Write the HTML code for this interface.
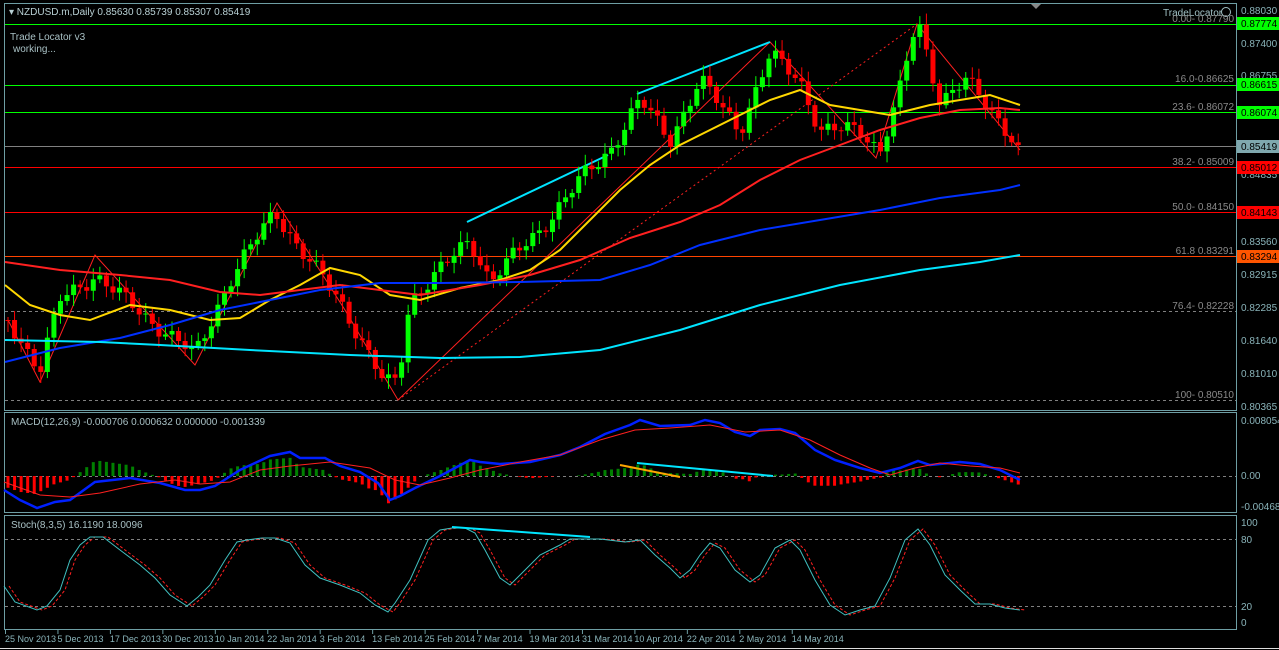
<!DOCTYPE html><html><head><meta charset="utf-8"><style>
html,body{margin:0;padding:0;background:#000;width:1279px;height:650px;overflow:hidden}
svg{display:block;font-family:"Liberation Sans",sans-serif}
</style></head><body>
<svg id="s" width="1279" height="650" viewBox="0 0 1279 650" xmlns="http://www.w3.org/2000/svg">
<rect width="1279" height="650" fill="#000"/>
<g fill="none" stroke="#6e9ea4" stroke-width="1">
<rect x="4.5" y="3.5" width="1232" height="407"/>
<rect x="4.5" y="412.5" width="1232" height="100"/>
<rect x="4.5" y="515.5" width="1232" height="114"/>
</g>
<line x1="0" y1="648.5" x2="1279" y2="648.5" stroke="#ddd"/>
<polygon points="1031,4 1041,4 1036,9" fill="#888"/>
<g id="lines"></g>
<g id="g"></g>
<g font-size="10" fill="#a0c0c4">
<text x="9" y="15" font-size="10" fill="#b8d0d4">▾ NZDUSD.m,Daily  0.85630 0.85739 0.85307 0.85419</text>
<text x="10" y="40" fill="#a8c0c4">Trade Locator v3</text>
<text x="13" y="52" fill="#a8c0c4">working...</text>
<text x="1163" y="16" fill="#a0c0c4">TradeLocator</text>
<circle cx="1226" cy="12" r="4.5" fill="none" stroke="#a0c0c4"/>
<text x="11" y="425" fill="#a8c0c4">MACD(12,26,9) -0.000706 0.000632 0.000000 -0.001339</text>
<text x="11" y="528" fill="#a8c0c4">Stoch(8,3,5) 16.1190 18.0096</text>
</g>
<g font-size="10" fill="#8a8a8a" text-anchor="end">
<text x="1234" y="22">0.00- 0.87790</text>
<text x="1234" y="82">16.0-0.86625</text>
<text x="1234" y="110">23.6- 0.86072</text>
<text x="1234" y="165">38.2- 0.85009</text>
<text x="1234" y="210">50.0- 0.84150</text>
<text x="1234" y="254">61.8 0.83291</text>
<text x="1234" y="309">76.4- 0.82228</text>
<text x="1234" y="398">100- 0.80510</text>
</g>
<g font-size="10" fill="#8ab4ba">
<text x="1241" y="14">0.88030</text>
<text x="1241" y="47">0.87400</text>
<text x="1241" y="79">0.86755</text>
<text x="1241" y="178">0.84835</text>
<text x="1241" y="245">0.83560</text>
<text x="1241" y="278">0.82915</text>
<text x="1241" y="311">0.82285</text>
<text x="1241" y="344">0.81640</text>
<text x="1241" y="377">0.81010</text>
<text x="1241" y="410">0.80365</text>
<text x="1241" y="424">0.008054</text>
<text x="1241" y="479">0.00</text>
<text x="1241" y="510">-0.00468</text>
<text x="1241" y="526">100</text>
<text x="1241" y="543">80</text>
<text x="1241" y="610">20</text>
<text x="1241" y="626">0</text>
</g>
<g font-size="10">
<rect x="1237" y="17" width="42" height="13" fill="#00ff00"/><text x="1241" y="27" fill="#000">0.87774</text>
<rect x="1237" y="78" width="42" height="13" fill="#00ff00"/><text x="1241" y="88" fill="#000">0.86615</text>
<rect x="1237" y="106" width="42" height="13" fill="#00ff00"/><text x="1241" y="116" fill="#000">0.86074</text>
<rect x="1237" y="140" width="42" height="13" fill="#7fa8ae"/><text x="1241" y="150" fill="#000">0.85419</text>
<rect x="1237" y="161" width="42" height="13" fill="#ff0000"/><text x="1241" y="171" fill="#000">0.85012</text>
<rect x="1237" y="206" width="42" height="13" fill="#ff0000"/><text x="1241" y="216" fill="#000">0.84143</text>
<rect x="1237" y="250" width="42" height="13" fill="#ff5500"/><text x="1241" y="260" fill="#000">0.83294</text>
</g>
<g font-size="9" fill="#8ab4ba" id="dates"></g>
</svg>
<script>
var NS="http://www.w3.org/2000/svg",g=document.getElementById('g'),L=document.getElementById('lines');
function el(p,t,a){var e=document.createElementNS(NS,t);for(var k in a)e.setAttribute(k,a[k]);p.appendChild(e);return e}
function ip(P,x){if(x<=P[0][0])return P[0][1];for(var i=1;i<P.length;i++)if(x<=P[i][0]){var a=P[i-1],b=P[i];return a[1]+(b[1]-a[1])*(x-a[0])/(b[0]-a[0])}return P[P.length-1][1]}
function pl(p,P,c,w,d){el(p,'polyline',{points:P.map(function(q){return q.join(',')}).join(' '),fill:'none',stroke:c,'stroke-width':w||1,'stroke-dasharray':d||''})}
function hl(y,c,d){el(L,'line',{x1:5,x2:1236,y1:y+.5,y2:y+.5,stroke:c,'stroke-dasharray':d||''})}
hl(24,'#00ff00');hl(85,'#00ff00');hl(112,'#00ff00');hl(146,'#808080');hl(167,'#ff0000');hl(212,'#ff0000');hl(256,'#ff4400');hl(311,'#808080','3,3');hl(400,'#808080','3,3');
hl(476,'#808080','3,3');hl(539,'#808080','3,3');hl(606,'#808080','3,3');
pl(g,[[8,320],[40,382],[95,255],[195,365],[277,203],[345,310],[398,400],[770,42],[876,158],[917,24],[1020,150]],'#ff2020',1);
pl(g,[[398,400],[917,24]],'#ff2020',1,'2,3');
pl(g,[[467,222],[608,155]],'#00e5ff',2);pl(g,[[637,94],[770,42]],'#00e5ff',2);
var C=[[8,320],[40,370],[60,300],[95,275],[150,320],[195,355],[230,280],[275,210],[300,250],[340,300],[385,385],[398,380],[410,300],[440,270],[470,240],[490,280],[540,230],[580,180],[610,150],[640,100],[670,140],[700,80],[740,130],[770,55],[800,80],[820,130],[860,130],[880,150],[900,90],[917,20],[940,100],[965,80],[990,110],[1020,145]];
var prev=ip(C,8);
for(var i=0;i<155;i++){var x=8+i*6.56,c=ip(C,x)+Math.sin(i*1.7)*6+Math.sin(i*.63)*4;if(i==154)c=145;var o=prev;prev=c;
var up=c<o,col=up?'#00ff00':'#ff0000',t=Math.min(o,c),b=Math.max(o,c);if(b-t<1)b=t+1;
var h=t-3-Math.abs(Math.sin(i*2.3))*8,l=b+3+Math.abs(Math.cos(i*1.9))*8;
el(g,'line',{x1:x,x2:x,y1:h,y2:l,stroke:col});el(g,'rect',{x:x-2.5,y:t,width:5,height:b-t,fill:col});}
pl(g,[[5,285],[30,305],[60,315],[90,320],[130,305],[170,310],[210,320],[240,318],[270,300],[300,285],[330,268],[360,275],[390,295],[420,300],[460,288],[500,280],[530,270],[560,250],[590,220],[620,190],[650,165],[680,145],[710,130],[740,115],[770,100],[800,90],[830,105],[860,110],[890,115],[910,110],[930,105],[960,100],[990,95],[1020,105]],'#ffd700',2);
pl(g,[[5,262],[60,270],[120,275],[170,280],[220,292],[260,295],[300,290],[340,285],[380,290],[420,295],[480,285],[530,275],[580,260],[630,238],[680,222],[720,205],[760,180],[800,160],[840,145],[880,130],[920,118],[960,110],[1000,108],[1020,110]],'#ff2020',2);
pl(g,[[5,362],[60,348],[120,338],[170,325],[220,310],[270,300],[320,290],[380,283],[440,283],[520,282],[600,280],[650,265],[700,245],[760,230],[820,220],[880,210],[940,198],[1000,190],[1020,185]],'#0030ff',2);
pl(g,[[5,340],[100,342],[160,345],[250,350],[350,355],[440,358],[520,357],[600,350],[680,330],[760,305],[840,285],[920,270],[980,262],[1020,255]],'#00e5ff',2);
var B=[[4,490],[20,500],[37,508],[55,502],[70,500],[95,482],[130,478],[160,483],[185,490],[200,490],[215,486],[240,470],[270,456],[290,452],[300,458],[325,458],[340,466],[360,472],[378,483],[390,500],[400,496],[415,488],[440,476],[470,460],[480,462],[500,464],[530,462],[560,455],[580,447],[605,434],[630,425],[640,420],[660,426],[690,425],[705,420],[720,423],[735,432],[750,436],[760,430],[780,429],[795,433],[815,450],[835,460],[860,468],[880,473],[900,468],[918,461],[930,465],[960,462],[980,464],[1000,470],[1020,480]];
var R=[[4,482],[40,495],[70,497],[100,493],[140,484],[175,480],[200,484],[230,482],[260,470],[290,466],[330,462],[370,468],[395,480],[420,485],[450,478],[480,470],[520,462],[560,455],[600,440],[635,430],[670,428],[710,425],[745,432],[780,430],[810,440],[840,455],[870,468],[890,475],[915,468],[940,463],[970,466],[1000,468],[1020,473]];
for(var i=0;i<155;i++){var x=8+i*6.56,d=(ip(R,x)-ip(B,x))*1.3;if(Math.abs(d)<.5)continue;
var col=d>0?'#008000':'#ff0000';el(g,'rect',{x:x-1.5,y:d>0?476-d:476,width:3,height:Math.abs(d),fill:col});}
pl(g,[[620,465],[680,477]],'#ffa500',2);pl(g,[[637,463],[773,476]],'#00e5ff',2);
pl(g,B,'#0020ff',2.5);pl(g,R,'#ff2020',1);
var S=[[4,586],[15,602],[37,610],[47,606],[60,590],[70,560],[80,545],[90,537],[103,537],[120,550],[140,565],[155,578],[170,595],[187,606],[198,597],[210,585],[225,560],[237,542],[247,540],[262,538],[275,538],[290,543],[305,565],[320,578],[340,585],[360,593],[375,605],[388,612],[395,603],[410,580],[428,540],[440,530],[452,528],[465,528],[475,533],[485,550],[500,578],[510,585],[520,575],[540,555],[560,545],[570,539],[600,539],[625,542],[640,540],[655,555],[670,568],[680,578],[690,570],[700,555],[710,543],[720,548],[735,570],[750,582],[760,575],[775,548],[790,540],[800,550],[815,580],[830,605],[845,615],[860,610],[875,606],[890,578],[905,540],[918,529],[930,545],[945,575],[960,590],[975,604],[990,604],[1005,608],[1020,610]];
pl(g,S.map(function(p){return[p[0]+5,p[1]]}),'#ff2020',1,'3,2');pl(g,S,'#40c0c0',1);
pl(g,[[452,527],[590,537]],'#00e5ff',2);
var D=['25 Nov 2013','5 Dec 2013','17 Dec 2013','30 Dec 2013','10 Jan 2014','22 Jan 2014','3 Feb 2014','13 Feb 2014','25 Feb 2014','7 Mar 2014','19 Mar 2014','31 Mar 2014','10 Apr 2014','22 Apr 2014','2 May 2014','14 May 2014'],dg=document.getElementById('dates');
D.forEach(function(t,k){var x=5+k*52.45;el(dg,'line',{x1:x+.5,x2:x+.5,y1:630,y2:634,stroke:'#6e9ea4'});var e=el(dg,'text',{x:x,y:642});e.textContent=t;});
</script>
</body></html>
